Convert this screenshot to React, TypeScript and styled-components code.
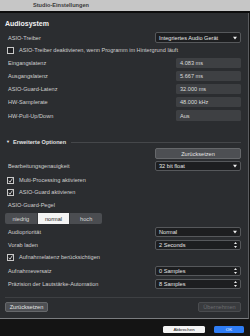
import React from "react";
import styled, { createGlobalStyle } from "styled-components";

const Global = createGlobalStyle`
  html, body { margin: 0; padding: 0; background: #141414; }
  body { width: 250px; height: 336px; overflow: hidden; font-family: "Liberation Sans", Arial, sans-serif; }
  * { box-sizing: border-box; }
`;

const Window = styled.div`
  width: 250px;
  height: 336px;
  display: flex;
  flex-direction: column;
  background: #141414;
`;

const TitleBar = styled.div`
  height: 11px;
  background: #c6c6c6;
  color: #3a3a3a;
  font-size: 5.6px;
  font-weight: bold;
  line-height: 11px;
  padding-left: 33px;
  flex: none;
`;

const TitleEdge = styled.div`
  height: 2px;
  background: #0c0c0c;
  flex: none;
`;

const Panel = styled.div`
  width: 249px;
  height: 306px;
  flex: none;
  background: #2b2d30;
  border-right: 1px solid #5a5c5f;
  border-bottom: 1px solid #7a7c7f;
  padding: 0 7px 0 5px;
  display: flex;
  flex-direction: column;
  color: #d4d4d4;
  font-size: 5.6px;
`;

const Heading = styled.div<{ $mt: number }>`
  margin-top: ${(p) => p.$mt}px;
  height: 10px;
  line-height: 10px;
  font-size: 7px;
  font-weight: bold;
  color: #f2f2f2;
`;

const Row = styled.div<{ $mt: number; $h: number }>`
  margin-top: ${(p) => p.$mt}px;
  height: ${(p) => p.$h}px;
  display: flex;
  align-items: center;
  justify-content: space-between;
  flex: none;
`;

const Label = styled.span`
  padding-left: 3px;
  color: #cfcfcf;
  white-space: nowrap;
`;

const ValueBox = styled.div`
  width: 65px;
  height: 100%;
  background: #3e4043;
  border-radius: 1.5px;
  padding-left: 4px;
  display: flex;
  align-items: center;
  color: #dcdcdc;
`;

const Select = styled.div`
  width: 86px;
  height: 100%;
  background: #1d1e20;
  border: 1px solid #56585b;
  border-radius: 2px;
  padding: 0 3px 0 3px;
  display: flex;
  align-items: center;
  justify-content: space-between;
  color: #e6e6e6;
`;

const Arrow = styled.span`
  font-size: 4px;
  color: #f0f0f0;
  line-height: 1;
`;

const Check = styled.span<{ $on?: boolean }>`
  width: 7px;
  height: 7px;
  border: 1px solid #c8c8c8;
  background: #222326;
  display: inline-flex;
  align-items: center;
  justify-content: center;
  flex: none;
`;

const CheckRow = styled.div<{ $mt: number }>`
  margin-top: ${(p) => p.$mt}px;
  height: 8px;
  display: flex;
  align-items: center;
  gap: 5px;
  padding-left: 2px;
  color: #cfcfcf;
  white-space: nowrap;
  flex: none;
`;

const SectionHeader = styled.div<{ $mt: number }>`
  margin-top: ${(p) => p.$mt}px;
  height: 8px;
  display: flex;
  align-items: center;
  gap: 3px;
  padding-left: 1px;
  font-weight: bold;
  color: #e0e0e0;
  flex: none;
`;

const Rule = styled.div`
  flex: 1;
  height: 1px;
  background: #45474a;
  margin-left: 2px;
`;

const Button = styled.div<{ $w: number; $disabled?: boolean }>`
  width: ${(p) => p.$w}px;
  height: 100%;
  background: ${(p) => (p.$disabled ? "#393b3e" : "#4d4f53")};
  border: 1px solid ${(p) => (p.$disabled ? "#4a4c4f" : "#66686b")};
  border-radius: 2px;
  display: flex;
  align-items: center;
  justify-content: center;
  color: ${(p) => (p.$disabled ? "#6c6e71" : "#e4e4e4")};
`;

const Segmented = styled.div<{ $mt: number }>`
  margin-top: ${(p) => p.$mt}px;
  width: 97px;
  height: 11px;
  display: flex;
  background: #4b4d51;
  border-radius: 2px;
  overflow: hidden;
  flex: none;
`;

const Segment = styled.div<{ $active?: boolean }>`
  flex: 1;
  display: flex;
  align-items: center;
  justify-content: center;
  background: ${(p) => (p.$active ? "#f4f4f4" : "transparent")};
  color: ${(p) => (p.$active ? "#1e1e1e" : "#d8d8d8")};
  border-right: 1px solid #3a3c3f;
  &:last-child { border-right: none; }
`;

const Separator = styled.div<{ $mt: number }>`
  margin-top: ${(p) => p.$mt}px;
  height: 1px;
  background: #3e4043;
  flex: none;
`;

const Footer = styled.div`
  flex: 1;
  display: flex;
  justify-content: flex-end;
  align-items: flex-start;
  padding: 7px 6px 0 0;
  gap: 9px;
`;

const DialogButton = styled.div<{ $primary?: boolean; $w: number }>`
  width: ${(p) => p.$w}px;
  height: 7px;
  border-radius: 1.5px;
  background: ${(p) => (p.$primary ? "#2f7df5" : "#f4f4f4")};
  color: ${(p) => (p.$primary ? "#ffffff" : "#222")};
  font-size: 4.4px;
  display: flex;
  align-items: center;
  justify-content: center;
`;

const CheckMark = () => (
  <svg width="5" height="5" viewBox="0 0 10 10">
    <path d="M1.5 5.5 L4 8.5 L8.8 1" stroke="#f0f0f0" strokeWidth="1.6" fill="none" />
  </svg>
);

const Spin = () => (
  <svg width="3" height="6" viewBox="0 0 6 12">
    <path d="M3 0 L6 4 L0 4 Z M3 12 L6 8 L0 8 Z" fill="#eeeeee" />
  </svg>
);

const Down = () => (
  <svg width="4" height="4" viewBox="0 0 8 8">
    <path d="M0 1.5 L8 1.5 L4 7 Z" fill="#f2f2f2" />
  </svg>
);

const valueRows: [string, string][] = [
  ["Eingangslatenz", "4.083 ms"],
  ["Ausgangslatenz", "5.667 ms"],
  ["ASIO-Guard-Latenz", "32.000 ms"],
  ["HW-Samplerate", "48.000 kHz"],
  ["HW-Pull-Up/Down", "Aus"],
];

export default function App() {
  return (
    <Window>
      <Global />
      <TitleBar>Studio-Einstellungen</TitleBar>
      <TitleEdge />
      <Panel>
        <Heading $mt={6}>Audiosystem</Heading>
        <Row $mt={3} $h={11}>
          <Label>ASIO-Treiber</Label>
          <Select>
            <span>Integriertes Audio Gerät</span>
            <Down />
          </Select>
        </Row>
        <CheckRow $mt={3}>
          <Check />
          <span>ASIO-Treiber deaktivieren, wenn Programm im Hintergrund läuft</span>
        </CheckRow>
        {valueRows.map(([l, v], i) => (
          <Row key={l} $mt={i === 0 ? 4 : 3} $h={i === 4 ? 11 : 10}>
            <Label>{l}</Label>
            <ValueBox>{v}</ValueBox>
          </Row>
        ))}
        <SectionHeader $mt={17}>
          <Arrow>▼</Arrow>
          <span>Erweiterte Optionen</span>
          <Rule />
        </SectionHeader>
        <Row $mt={2} $h={11}>
          <span />
          <Button $w={86}>Zurücksetzen</Button>
        </Row>
        <Row $mt={2} $h={10}>
          <Label>Bearbeitungsgenauigkeit</Label>
          <Select>
            <span>32 bit float</span>
            <Down />
          </Select>
        </Row>
        <CheckRow $mt={5}>
          <Check $on>
            <CheckMark />
          </Check>
          <span>Multi-Processing aktivieren</span>
        </CheckRow>
        <CheckRow $mt={4}>
          <Check $on>
            <CheckMark />
          </Check>
          <span>ASIO-Guard aktivieren</span>
        </CheckRow>
        <Row $mt={5} $h={8}>
          <Label>ASIO-Guard-Pegel</Label>
        </Row>
        <Segmented $mt={4}>
          <Segment>niedrig</Segment>
          <Segment $active>normal</Segment>
          <Segment>hoch</Segment>
        </Segmented>
        <Row $mt={3} $h={10}>
          <Label>Audiopriorität</Label>
          <Select>
            <span>Normal</span>
            <Down />
          </Select>
        </Row>
        <Row $mt={3} $h={10}>
          <Label>Vorab laden</Label>
          <Select>
            <span>2 Seconds</span>
            <Spin />
          </Select>
        </Row>
        <CheckRow $mt={3}>
          <Check $on>
            <CheckMark />
          </Check>
          <span>Aufnahmelatenz berücksichtigen</span>
        </CheckRow>
        <Row $mt={5} $h={10}>
          <Label>Aufnahmeversatz</Label>
          <Select>
            <span>0 Samples</span>
            <Spin />
          </Select>
        </Row>
        <Row $mt={3} $h={10}>
          <Label>Präzision der Lautstärke-Automation</Label>
          <Select>
            <span>8 Samples</span>
            <Spin />
          </Select>
        </Row>
        <Separator $mt={8} />
        <Row $mt={4} $h={10}>
          <Button $w={43}>Zurücksetzen</Button>
          <Button $w={43} $disabled>
            Übernehmen
          </Button>
        </Row>
      </Panel>
      <Footer>
        <DialogButton $w={42}>Abbrechen</DialogButton>
        <DialogButton $w={30} $primary>
          OK
        </DialogButton>
      </Footer>
    </Window>
  );
}
